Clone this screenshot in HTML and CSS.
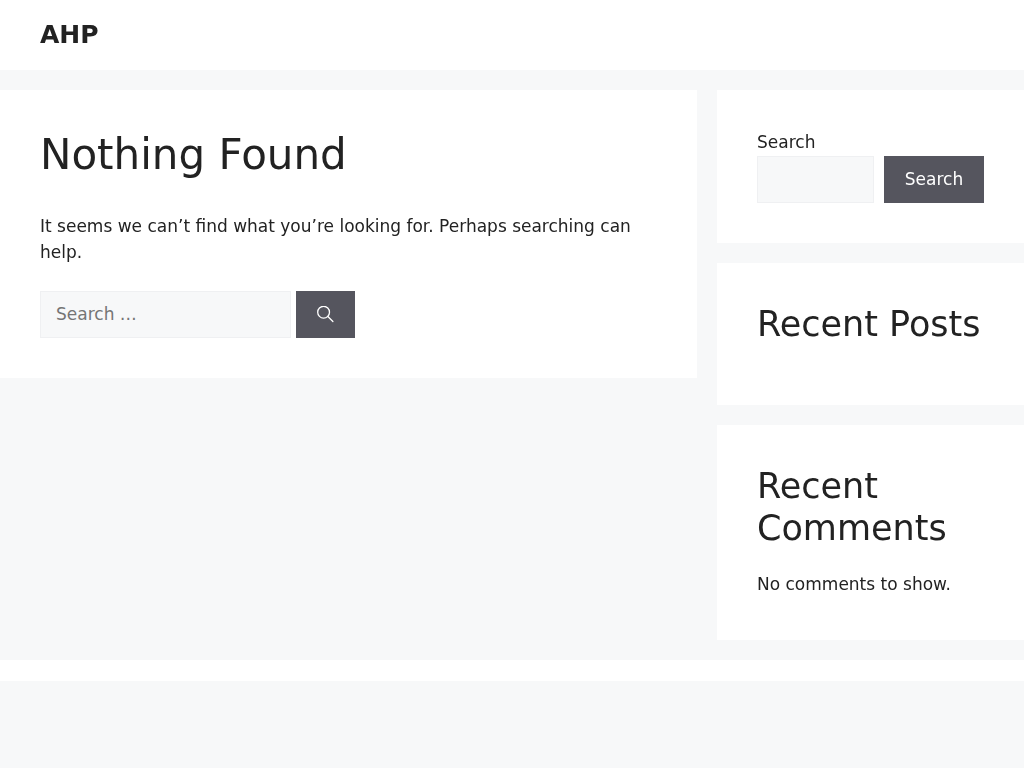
FILE: index.html
```html
<!DOCTYPE html>
<html lang="en">
<head>
<meta charset="utf-8">
<title>AHP</title>
<link rel="stylesheet" href="styles.css">
</head>
<body>
<header class="site-header"><a class="site-title" href="#">AHP</a></header>
<div class="site-main">
  <main class="content card">
    <h1>Nothing Found</h1>
    <p class="lead">It seems we can’t find what you’re looking for. Perhaps searching can help.</p>
    <form class="search-form">
      <input class="field field-main" type="search" placeholder="Search …">
      <button class="btn btn-icon" type="button" aria-label="Search">
        <svg width="17" height="17" viewBox="0.3 0.7 17 17" fill="none" stroke="currentColor" stroke-width="1.3" stroke-linecap="round"><circle cx="6.9" cy="6.9" r="5.9"/><path d="M11.200 11.200 16.200 16.200"/></svg>
      </button>
    </form>
  </main>
  <aside class="sidebar">
    <section class="card widget">
      <label class="label" for="s">Search</label>
      <div class="block-search">
        <input class="field field-side" id="s" type="search">
        <button class="btn btn-text" type="button"><span class="btn-label">Search</span></button>
      </div>
    </section>
    <section class="card widget"><h2>Recent Posts</h2></section>
    <section class="card widget">
      <h2>Recent Comments</h2>
      <p class="no-comments">No comments to show.</p>
    </section>
  </aside>
</div>
<footer class="site-footer"></footer>
</body>
</html>
```
FILE: styles.css
```css
* { box-sizing: border-box; }
html, body { margin: 0; padding: 0; }
body {
  background: #f7f8f9;
  color: #222;
  font-family: "DejaVu Sans", sans-serif;
  font-size: 17px;
  line-height: 1.5;
}
.site-title, h1, h2, .lead, .label, .no-comments, .btn-label, .field { will-change: opacity; }
.site-header { background: #fff; height: 70px; padding: 20px 40px; }
.site-title {
  display: block;
  color: #222;
  font-size: 25px;
  font-weight: 700;
  line-height: 30px;
  text-decoration: none;
}
.site-main { display: flex; gap: 20px; padding: 20px 0; align-items: flex-start; }
.card { background: #fff; padding: 40px; }
.content { width: 697px; flex: none; }
.sidebar { flex: 1; display: flex; flex-direction: column; gap: 20px; min-width: 0; }
h1 { margin: 0; font-size: 42px; font-weight: 400; line-height: 1.2; }
h2 { margin: 0 0 20px; font-size: 35px; font-weight: 400; line-height: 1.2; }
.lead { margin: 34px 0 25.500px; }
.search-form { display: flex; gap: 5px; }
.field {
  height: 47px;
  padding: 10px 15px;
  background: #f7f8f9;
  border: 1px solid #eff0f2;
  border-radius: 0;
  color: #666;
  font: inherit;
  outline: none;
  appearance: none;
}
.field::placeholder { color: #757575; opacity: 1; }
.field-main { width: 251px; }
.field-side { flex: 1; min-width: 0; }
.btn {
  height: 47px;
  padding: 10px 20px;
  background: #55555e;
  border: 0;
  color: #fff;
  font: inherit;
}
.btn-icon { width: 59px; display: flex; align-items: center; justify-content: center; padding: 0; }
.btn-text { width: 100px; padding: 1px 0 0; }
.btn-label { display: block; }
.label { display: block; }
.block-search { display: flex; gap: 10px; }
.no-comments { margin: 23px 0 2.500px; }
.site-footer { background: #fff; height: 21px; }
```
